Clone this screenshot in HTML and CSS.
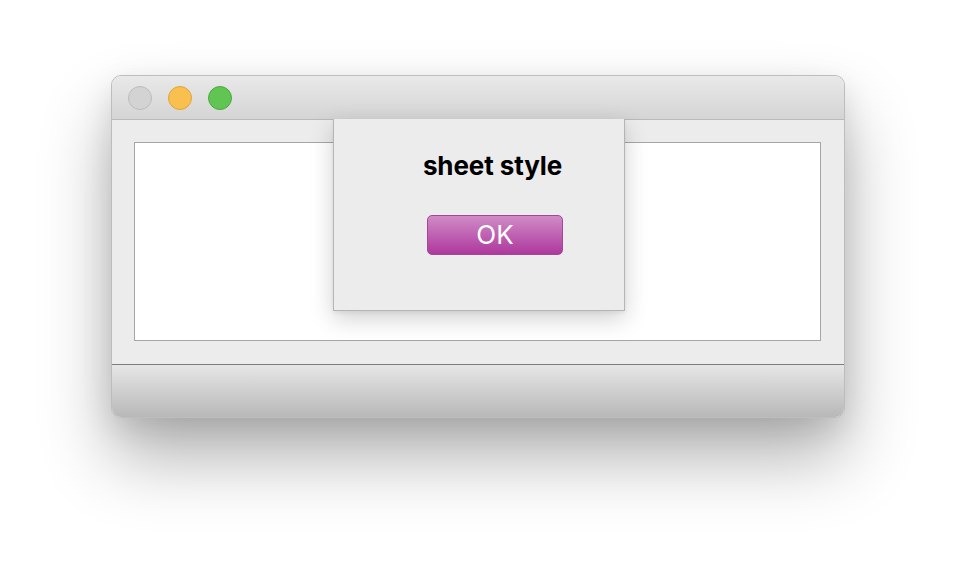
FILE: index.html
```html
<!DOCTYPE html>
<html>
<head>
<meta charset="utf-8">
<link rel="stylesheet" href="styles.css">
</head>
<body>
<div class="stage">
  <div class="window">
    <div class="titlebar">
      <span class="light gray"></span>
      <span class="light yellow"></span>
      <span class="light green"></span>
    </div>
    <div class="content">
      <div class="field"></div>
    </div>
    <div class="bottombar"></div>
    <div class="sheet">
      <div class="sheet-title">sheet style</div>
      <button class="ok">OK</button>
    </div>
  </div>
</div>
</body>
</html>
```

FILE: styles.css
```css
html, body {
  margin: 0;
  padding: 0;
  background: #ffffff;
}
.stage {
  width: 956px;
  height: 566px;
  display: flex;
  justify-content: center;
  align-items: flex-start;
  padding-top: 75px;
  box-sizing: border-box;
  font-family: Inter, "Noto Sans", "Liberation Sans", sans-serif;
}
.window {
  position: relative;
  width: 734px;
  height: 343px;
  box-sizing: border-box;
  border: 1px solid #bdbdbd;
  border-radius: 10px;
  background: #ececec;
  display: flex;
  flex-direction: column;
  box-shadow: 0 40px 70px rgba(0,0,0,0.30), 0 10px 30px rgba(0,0,0,0.10);
}
.titlebar {
  height: 43px;
  border-bottom: 1px solid #b9b9b9;
  border-radius: 9px 9px 0 0;
  background: linear-gradient(#e9e9e9, #d4d4d4);
  display: flex;
  align-items: center;
  gap: 16px;
  padding-left: 16px;
  flex-shrink: 0;
}
.light {
  width: 24px;
  height: 24px;
  border-radius: 50%;
  box-sizing: border-box;
}
.light.gray { background: #d3d3d3; border: 1px solid #bcbcbc; }
.light.yellow { background: #f9bf4f; border: 1px solid #e1a43b; }
.light.green { background: #60c553; border: 1px solid #4ea840; }
.content {
  height: 245px;
  box-sizing: border-box;
  padding: 22px 23px 23px 22px;
  border-bottom: 1px solid #7d7d7d;
  background: #ececec;
  flex-shrink: 0;
}
.field {
  height: 199px;
  box-sizing: border-box;
  background: #ffffff;
  border: 1px solid #a6a6a6;
}
.bottombar {
  flex: 1;
  border-radius: 0 0 9px 9px;
  background: linear-gradient(#e6e6e6, #b8b8b8);
}
.sheet {
  position: absolute;
  left: 221px;
  top: 43px;
  width: 292px;
  height: 192px;
  box-sizing: border-box;
  background: #ececec;
  border: 1px solid #b5b5b5;
  border-top: none;
  box-shadow: 0 8px 22px rgba(0,0,0,0.18), 0 2px 4px rgba(0,0,0,0.06);
  display: flex;
  flex-direction: column;
  align-items: center;
  padding-left: 32px;
}
.sheet-title {
  margin-top: 29px;
  margin-right: 5px;
  font-size: 26px;
  font-weight: 700;
  color: #000;
  line-height: 36px;
  letter-spacing: -0.1px;
}
.ok {
  margin-top: 31px;
  width: 136px;
  height: 40px;
  border-radius: 5px;
  border: 1px solid #a6449a;
  background: linear-gradient(#d08bc6, #ae389e);
  color: #ffffff;
  font-family: Inter, "Noto Sans", "Liberation Sans", sans-serif;
  font-size: 26px;
  font-weight: 400;
  padding: 0;
  line-height: 38px;
}
```
